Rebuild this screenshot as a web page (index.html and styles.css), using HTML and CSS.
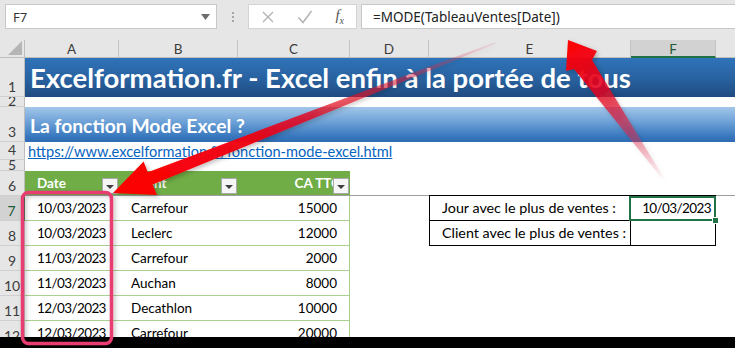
FILE: index.html
```html
<!DOCTYPE html>
<html>
<head>
    <title>La fonction Mode Excel</title>
    <meta charset="UTF-8" />
    <link rel="stylesheet" href="styles.css">
</head>
<body>
    <div class="app">
        <div class="formula-bar">
            <div class="name-box">
                <span>F7</span>
                <svg class="caret" width="9" height="6" viewBox="0 0 9 6"><path d="M0 0h9L4.5 6z" fill="#6d6d6d"/></svg>
            </div>
            <div class="grip">
                <span></span><span></span><span></span>
            </div>
            <div class="fx-buttons">
                <svg width="14" height="14" viewBox="0 0 14 14"><path d="M2 2l10 10M12 2L2 12" stroke="#b3b3b3" stroke-width="1.4"/></svg>
                <svg width="16" height="14" viewBox="0 0 16 14"><path d="M1.5 7.5l4.5 5L14.5 1" stroke="#b3b3b3" stroke-width="1.5" fill="none"/></svg>
                <span class="fx">f<sub>x</sub></span>
            </div>
            <div class="formula">=MODE(TableauVentes[Date])</div>
        </div>

        <div class="sheet">
            <!-- column headers -->
            <div class="corner"><svg width="14" height="14" viewBox="0 0 14 14"><path d="M14 0V14H0z" fill="#b5b5b5"/></svg></div>
            <div class="colhead">A</div>
            <div class="colhead">B</div>
            <div class="colhead">C</div>
            <div class="colhead">D</div>
            <div class="colhead">E</div>
            <div class="colhead selected">F</div>
            <div class="colhead last"></div>

            <div class="rowhead">1</div>
            <div class="title span-all">Excelformation.fr - Excel enfin à la portée de tous</div>

            <div class="rowhead short">2</div>
            <div class="span-all"></div>

            <div class="rowhead">3</div>
            <div class="subtitle span-all">La fonction Mode Excel ?</div>

            <div class="rowhead">4</div>
            <div class="link-cell span-all"><a href="#">https://www.excelformation.fr/fonction-mode-excel.html</a></div>

            <div class="rowhead short">5</div>
            <div class="span-all"></div>

            <div class="rowhead">6</div>
            <div class="th">Date<span class="filter"></span></div>
            <div class="th">Client<span class="filter"></span></div>
            <div class="th num">CA TTC<span class="filter"></span></div>
            <div class="freeze span-rest"></div>

            <div class="rowhead selected">7</div>
            <div class="td date">10/03/2023</div>
            <div class="td">Carrefour</div>
            <div class="td num">15000</div>
            <div class="blank"></div>
            <div class="label first">Jour avec le plus de ventes :</div>
            <div class="value first active date">10/03/2023</div>
            <div class="blank"></div>

            <div class="rowhead">8</div>
            <div class="td date">10/03/2023</div>
            <div class="td">Leclerc</div>
            <div class="td num">12000</div>
            <div class="blank"></div>
            <div class="label">Client avec le plus de ventes :</div>
            <div class="value"></div>
            <div class="blank"></div>

            <div class="rowhead">9</div>
            <div class="td date">11/03/2023</div>
            <div class="td">Carrefour</div>
            <div class="td num">2000</div>
            <div class="span-rest"></div>

            <div class="rowhead">10</div>
            <div class="td date">11/03/2023</div>
            <div class="td">Auchan</div>
            <div class="td num">8000</div>
            <div class="span-rest"></div>

            <div class="rowhead">11</div>
            <div class="td date">12/03/2023</div>
            <div class="td">Decathlon</div>
            <div class="td num">10000</div>
            <div class="span-rest"></div>

            <div class="rowhead">12</div>
            <div class="td date">12/03/2023</div>
            <div class="td">Carrefour</div>
            <div class="td num">20000</div>
            <div class="span-rest"></div>
        </div>

        <div class="taskbar"></div>

        <!-- annotations drawn over the screenshot -->
        <svg class="overlay" width="735" height="348" viewBox="0 0 735 348">
            <defs>
                <linearGradient id="arrowDown" gradientUnits="userSpaceOnUse" x1="113" y1="193" x2="495" y2="43">
                    <stop offset="0" stop-color="#ff0000" stop-opacity="1"/>
                    <stop offset="0.35" stop-color="#f00010" stop-opacity="0.95"/>
                    <stop offset="0.7" stop-color="#dc1028" stop-opacity="0.6"/>
                    <stop offset="1" stop-color="#e04060" stop-opacity="0.1"/>
                </linearGradient>
                <linearGradient id="arrowUp" gradientUnits="userSpaceOnUse" x1="568" y1="40" x2="663" y2="178">
                    <stop offset="0" stop-color="#ff0000" stop-opacity="1"/>
                    <stop offset="0.3" stop-color="#e8001a" stop-opacity="0.88"/>
                    <stop offset="0.65" stop-color="#e02040" stop-opacity="0.55"/>
                    <stop offset="1" stop-color="#e86080" stop-opacity="0.05"/>
                </linearGradient>
                <filter id="shadow" x="-10%" y="-10%" width="120%" height="120%">
                    <feDropShadow dx="2" dy="2" stdDeviation="2" flood-color="#000" flood-opacity="0.25"/>
                </filter>
            </defs>
            <rect x="22.5" y="192.5" width="89" height="151" rx="6" fill="none" stroke="#e83c70" stroke-width="3.5" filter="url(#shadow)"/>
            <polygon points="113,193 157,195 152.6,184.4 495.3,43.7 494.7,42.3 147.8,172.3 143.6,161.6" fill="url(#arrowDown)" filter="url(#shadow)"/>
            <polygon points="568,40 597,51 592,60 664,178 662,178.5 574,69 566,71" fill="url(#arrowUp)" filter="url(#shadow)"/>
        </svg>
    </div>
</body>
</html>
```

FILE: styles.css
```css
body {
    margin: 0;
    font-family: "Lato", "Liberation Sans", sans-serif;
    background: #fff;
}

.app {
    position: relative;
    width: 735px;
    height: 348px;
    overflow: hidden;
}

/* formula bar */

.formula-bar {
    height: 40px;
    box-sizing: border-box;
    background: #e6e6e6;
    display: flex;
    align-items: flex-start;
    padding: 4px 0 0 5px;
}

.name-box {
    width: 212px;
    height: 25px;
    box-sizing: border-box;
    background: #fff;
    border: 1px solid #c8c8c8;
    display: flex;
    align-items: center;
    justify-content: space-between;
    padding: 0 6px 0 7px;
    font-family: "Noto Sans", sans-serif;
    font-size: 13px;
    color: #333;
}

.grip {
    width: 31px;
    height: 25px;
    display: flex;
    flex-direction: column;
    align-items: center;
    justify-content: center;
    gap: 2px;
}

.grip span {
    width: 2px;
    height: 2px;
    background: #a6a6a6;
}

.fx-buttons {
    width: 109px;
    height: 25px;
    box-sizing: border-box;
    background: #fff;
    border: 1px solid #d4d4d4;
    display: flex;
    align-items: center;
    justify-content: space-between;
    padding: 0 12px 0 12px;
}

.fx {
    font-family: "Liberation Serif", serif;
    font-style: italic;
    font-size: 15px;
    color: #555;
}

.fx sub {
    font-size: 10px;
}

.formula {
    flex: 1;
    height: 25px;
    margin-left: 4px;
    box-sizing: border-box;
    background: #fff;
    border: 1px solid #c8c8c8;
    border-right: none;
    padding: 3px 0 0 11px;
    font-family: "Noto Sans", sans-serif;
    font-size: 13.5px;
    color: #222;
}

/* grid */

.sheet {
    display: grid;
    grid-template-columns: 25px 94px 119px 112px 79px 202px 85px 1fr;
    grid-template-rows: 18px 39px 10px 35px 18px 11px 25px repeat(6, 25px);
    height: 297px;
    overflow: hidden;
    font-size: 13.5px;
    color: #000;
}

.corner {
    background: #e6e6e6;
    border-right: 1px solid #bdbdbd;
    border-bottom: 1px solid #bdbdbd;
    display: flex;
    align-items: flex-end;
    justify-content: flex-end;
    padding: 0 2px 2px 0;
    box-sizing: border-box;
}

.colhead {
    background: #e6e6e6;
    border-right: 1px solid #c4c4c4;
    border-bottom: 1px solid #bdbdbd;
    box-sizing: border-box;
    text-align: center;
    line-height: 18px;
    color: #3c3c3c;
    font-size: 13.5px;
}

.colhead.selected {
    background: #d2d2d2;
    border-bottom: 2px solid #217346;
    color: #1e5b38;
}

.colhead.last {
    border-right: none;
}

.rowhead {
    background: #e6e6e6;
    border-right: 1px solid #bdbdbd;
    border-bottom: 1px solid #d0d0d0;
    box-sizing: border-box;
    display: flex;
    align-items: flex-end;
    justify-content: center;
    line-height: 15px;
    padding-bottom: 2px;
    overflow: hidden;
    color: #3c3c3c;
    font-size: 14px;
}

.rowhead.short {
    line-height: 8px;
    padding-bottom: 1px;
}

.rowhead.selected {
    background: #d2d2d2;
    border-right: 2px solid #217346;
    color: #1e5b38;
}

.span-all {
    grid-column: 2 / -1;
}

.span-rest {
    grid-column: 5 / -1;
}

.title {
    background: linear-gradient(#2f73b9, #28619f 55%, #1f4b80);
    color: #fff;
    font-weight: bold;
    font-size: 27.5px;
    display: flex;
    align-items: flex-end;
    padding: 0 0 3px 5px;
    white-space: nowrap;
}

.subtitle {
    background: linear-gradient(#a2c6e9, #6a9fd6 45%, #3776bd 85%, #2f6db2);
    color: #fff;
    font-weight: bold;
    font-size: 19.3px;
    display: flex;
    align-items: flex-end;
    padding: 0 0 5px 5px;
    white-space: nowrap;
}

.link-cell {
    display: flex;
    align-items: flex-end;
    padding: 0 0 0 3px;
    white-space: nowrap;
    line-height: 17px;
}

.link-cell a {
    color: #0563c1;
    font-size: 14.6px;
}

.th {
    position: relative;
    background: #70ad47;
    color: #fff;
    font-weight: bold;
    display: flex;
    align-items: flex-end;
    padding: 0 0 4px 12px;
    border-bottom: 1px solid #9e9e9e;
}

.th.num {
    justify-content: flex-end;
    padding: 0 10px 4px 0;
}

.filter {
    position: absolute;
    right: 1px;
    bottom: 1px;
    width: 16px;
    height: 16px;
    box-sizing: border-box;
    background: #f6f6f6;
    border: 1px solid #a9a9a9;
}

.filter::after {
    content: "";
    position: absolute;
    left: 3px;
    top: 6px;
    border-left: 4px solid transparent;
    border-right: 4px solid transparent;
    border-top: 4px solid #404040;
}

.freeze {
    border-bottom: 1px solid #9e9e9e;
}

.td {
    display: flex;
    align-items: flex-end;
    padding: 0 0 4px 12px;
    border-bottom: 1px solid #a9d08e;
    white-space: nowrap;
}

.td.num {
    justify-content: flex-end;
    padding-right: 12px;
    border-right: 1px solid #a9d08e;
}

.date {
    letter-spacing: -0.6px;
}

.label,
.value {
    display: flex;
    align-items: flex-end;
    padding: 0 0 4px 12px;
    border: 1px solid #000;
    border-top: none;
    white-space: nowrap;
}

.label {
    font-size: 14.3px;
}

.label.first,
.value.first {
    border-top: 1px solid #000;
    margin-top: -1px;
}

.value {
    position: relative;
    border-left: none;
    justify-content: flex-end;
    padding-right: 4px;
}

.value.active::after {
    content: "";
    position: absolute;
    left: -2px;
    top: 0;
    right: -1px;
    bottom: -1px;
    border: 2px solid #217346;
}

.value.active::before {
    content: "";
    position: absolute;
    right: -4px;
    bottom: -4px;
    width: 5px;
    height: 5px;
    background: #217346;
    border: 1px solid #fff;
    z-index: 1;
}

.taskbar {
    height: 11px;
    background: #000;
}

.overlay {
    position: absolute;
    left: 0;
    top: 0;
    pointer-events: none;
}
```
